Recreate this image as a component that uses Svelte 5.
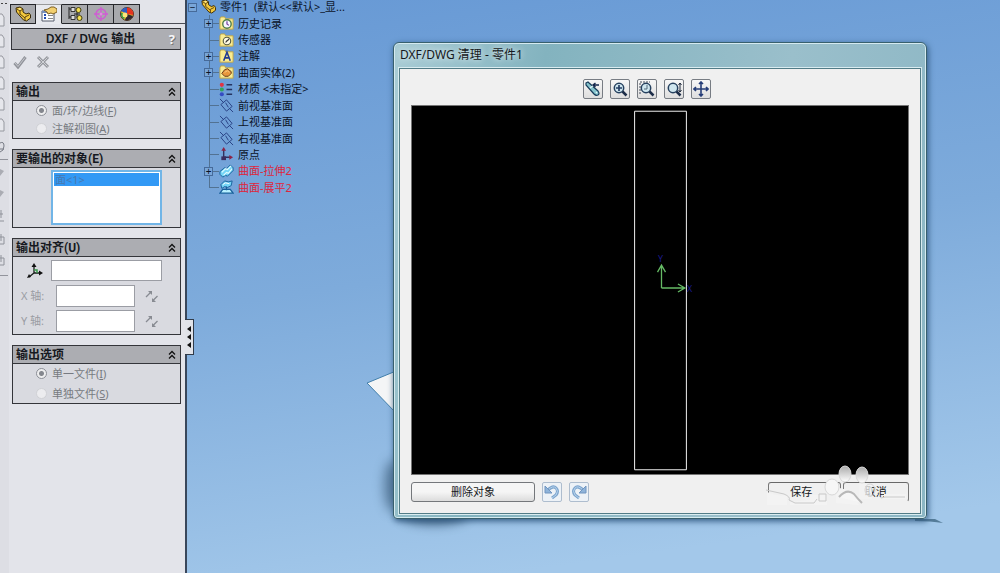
<script>
  const tabs = ['part', 'props', 'config', 'target', 'ball'];
  const marks = [20, 41, 62, 83, 104, 125];
  const tools = [
    { icon: 'wand', label: '清理' },
    { icon: 'fit', label: '整屏显示' },
    { icon: 'area', label: '局部放大' },
    { icon: 'zoom', label: '放大或缩小' },
    { icon: 'pan', label: '平移' }
  ];
  const nodes = [
    { icon: 'history', text: '历史记录', open: true },
    { icon: 'sensor', text: '传感器' },
    { icon: 'note', text: '注解', open: true },
    { icon: 'solid', text: '曲面实体(2)', open: true },
    { icon: 'material', text: '材质 <未指定>' },
    { icon: 'plane', text: '前视基准面' },
    { icon: 'plane', text: '上视基准面' },
    { icon: 'plane', text: '右视基准面' },
    { icon: 'origin', text: '原点' },
    { icon: 'extrude', text: '曲面-拉伸2', open: true, red: true },
    { icon: 'flatten', text: '曲面-展平2', red: true }
  ];
</script>

{#snippet icon(name)}
  <svg class="icon" viewBox="0 0 16 16" aria-hidden="true">
    {#if name === 'part'}
      <path d="M1 2l4-1 3 2v3l3 2 3-1 1.500 2v3l-4 3-3-1-7-8z" fill="#f3c83c" stroke="#3a2a08" />
      <path d="M2 3l3 2v3l5 4M5 5l3-2M10 14v-3l4-2" fill="none" stroke="#5a4210" />
      <path d="M3 3l2-1 1.500 1L5 4z" fill="#fff0a0" />
    {:else if name === 'props'}
      <path d="M1 5h12v10H1z" fill="#fff" stroke="#555b6b" />
      <path d="M1 5h12v2H1z" fill="#7990ba" />
      <path d="M3 9h2M3 12h2" stroke="#234bb0" stroke-width="2" />
      <path d="M7 9.500h5M7 12.500h5" stroke="#888" />
      <path d="M3 4l4-1 3-2h3l3 2v3l-4 2-2-1-3 1-1-2z" fill="#f2cf70" stroke="#7d5e22" />
    {:else if name === 'config'}
      <path d="M2 1v12M2 3h4M2 11h4M10 4v8M7 8h6" fill="none" stroke="#222" />
      <path d="M4 1.500h4v4H4zM4 9.500h4v4H4z" fill="#ddd" stroke="#333" />
      <circle cx="11.500" cy="4" r="2.500" fill="#f5df50" stroke="#444010" />
      <circle cx="12.500" cy="12" r="2.500" fill="#f5df50" stroke="#444010" />
    {:else if name === 'target'}
      <circle cx="8" cy="8" r="5" fill="none" stroke="#cf5bd3" stroke-width="1.300" />
      <path d="M8 1v14M1 8h14" stroke="#cf5bd3" stroke-width="1.300" />
      <circle cx="8" cy="8" r="1.500" fill="#e389e3" />
    {:else if name === 'ball'}
      <circle cx="8" cy="8" r="6.500" fill="#f5c527" stroke="#473126" />
      <path d="M8 8L2 5a6.500 6.500 0 0 1 6-3.500z" fill="#315bc0" />
      <path d="M8 8V1.500A6.500 6.500 0 0 1 14.400 9z" fill="#e53421" />
      <path d="M8 8l6 2a6.500 6.500 0 0 1-8 4z" fill="#302631" />
      <path d="M8 8l-3 5a6 6 0 0 1-3-6z" fill="#2d9b43" />
      <circle cx="6" cy="9" r="2.500" fill="#ffe57a" />
    {:else if name === 'history' || name === 'sensor' || name === 'note' || name === 'solid'}
      <path d="M1 3l1-2h4l1 2h8v11H1z" fill="#faec91" stroke="#bda449" />
      {#if name === 'history'}
        <circle cx="8.500" cy="8.500" r="4.500" fill="#f8f6ff" stroke="#4f7e49" stroke-width="1.500" />
        <path d="M8.500 5.500v3l2 1.500" fill="none" stroke="#7041a0" stroke-width="1.300" />
      {:else if name === 'sensor'}
        <circle cx="8.500" cy="8.500" r="4" fill="#fffbe3" stroke="#565942" stroke-width="1.200" />
        <path d="M7 10l4-4M8 8h2" stroke="#333" stroke-width="1.300" />
      {:else if name === 'note'}
        <path d="M5 12.500l3.500-9 3.500 9M6.500 9.500h4" fill="none" stroke="#233b91" stroke-width="1.700" />
      {:else}
        <path d="M3 9l3-4 3-1 4 3v2l-3 3H6z" fill="#e8973b" stroke="#633514" />
        <path d="M6 8l3-2 2 2" fill="none" stroke="#f8cb84" />
      {/if}
    {:else if name === 'material'}
      <circle cx="3" cy="3" r="2.200" fill="#df3544" />
      <circle cx="3" cy="8" r="2.200" fill="#31a45d" />
      <circle cx="3" cy="13" r="2.200" fill="#344cc3" />
      <path d="M8 3h6M8 8h6M8 13h6" stroke="#253461" stroke-width="1.500" />
    {:else if name === 'plane'}
      <path d="M2 7l6-5 6 7-6 5zM1 1l4 4M11 11l4 4M7 5l3 5" fill="none" stroke="#263f82" />
    {:else if name === 'origin'}
      <path d="M5 3v8h7" fill="none" stroke="#33305d" stroke-width="1.500" />
      <path d="M2.500 4L5 0l2.500 4zM11 8.500l4 2.500-4 2.500z" fill="#8d2347" />
      <path d="M2.500 10h5v4h-5z" fill="#3a2c5f" />
    {:else if name === 'extrude'}
      <path d="M1 8l5-4 2 1 4-4 3 3v3l-6 6-2-1-3 2-3-3z" fill="#75d5f6" stroke="#17609b" />
      <path d="M3 9l4-4 2 1 4-4M5 12l3-3 2 1 4-5" fill="none" stroke="#e1fbff" stroke-width="1.200" />
    {:else if name === 'flatten'}
      <path d="M2 5l4-4 4 1 4-1-1 5-4 2-3-1-3 2z" fill="#75d5f6" stroke="#17609b" />
      <path d="M1 14l3-4h8l3 4zM8 7v4" fill="#b7f0ff" stroke="#17609b" stroke-width="1.300" />
      <path d="M4 5l3-2 4 1" fill="none" stroke="#fff" />
    {:else if name === 'wand'}
      <path d="M1 2l2-1 10 9q2 3 0 4t-4-1L1 4z" fill="#87c5ce" stroke="#173c5a" stroke-width="1.200" />
      <path d="M5 7l4-3M11 11l1 1" stroke="#e3f8fa" stroke-width="1.300" />
      <path d="M8 4h6M10.500 2L8 4l2.500 2" fill="none" stroke="#14264c" stroke-width="1.400" />
    {:else if name === 'fit' || name === 'zoom' || name === 'area'}
      <circle cx="7" cy="7" r="4.700" fill="#cfe6ef" stroke="#26415f" stroke-width="1.500" />
      <path d="M10.500 10.500l4 4" stroke="#1d2e49" stroke-width="2.500" />
      {#if name === 'fit'}
        <path d="M7 4v6M4 7h6" stroke="#263f65" stroke-width="1.700" />
      {:else if name === 'area'}
        <path d="M1 13V1h10" fill="none" stroke="#454c5a" stroke-dasharray="2 1" />
        <path d="M8 4v4H5" fill="none" stroke="#536b7c" />
      {:else}
        <path d="M14 2v9M12.500 4L14 2l1.500 2M12.500 9l1.500 2 1.500-2" fill="none" stroke="#202b3d" />
      {/if}
    {:else if name === 'pan'}
      <path d="M8 1v14M1 8h14M6 3l2-2 2 2M6 13l2 2 2-2M3 6L1 8l2 2M13 6l2 2-2 2" fill="none" stroke="#263e78" stroke-width="1.600" />
    {:else if name === 'undo' || name === 'redo'}
      <g transform={name === 'redo' ? 'translate(16 0) scale(-1 1)' : undefined}>
        <path d="M4 6q5-5 8-2t0 7l-4 3" fill="none" stroke="#7ea5cd" stroke-width="3" />
        <path d="M4 6q5-5 8-2t0 7l-4 3" fill="none" stroke="#b5d3ee" />
        <path d="M1 2v7h7z" fill="#8fb4da" stroke="#7095c0" />
      </g>
    {/if}
  </svg>
{/snippet}

{#snippet heading(text)}
  <header><h2>{text}</h2>
    <button class="fold" aria-label="折叠"><svg viewBox="0 0 8 10"><path d="M1 4.500l3-3 3 3M1 8.500l3-3 3 3" /></svg></button>
  </header>
{/snippet}

{#snippet axis(name)}
  <div class="axis">
    <label for={'axis' + name}>{name} 轴:</label>
    <input id={'axis' + name} type="text" />
    <button class="flip" aria-label={'反转 ' + name + ' 轴'}>
      <svg viewBox="0 0 14 12"><path d="M1 7l5-5M7.500 11l5-5" /><path d="M3 1h4v4zM7 8v4h4z" fill="#888b92" stroke="none" /></svg>
    </button>
  </div>
{/snippet}

<div class="app">
  <div class="strip" aria-hidden="true">
    <svg viewBox="0 0 9 290">
      {#each marks as y}
        <path d="M-2 {y - 6}h4l2 3v9h-6" fill="#e6e7ec" stroke="#96989f" />
      {/each}
      <path d="M0 143q4-2 4 3t-4 6M0 149h4" fill="none" stroke="#777b84" />
      <path d="M0 159.500h8M0 275.500h8" stroke="#92949c" />
      <path d="M0 169l4 2-4 5zM0 190l4 2-4 5z" fill="#aaacb3" />
      <path d="M1 210v8M-1 214h4M0 221h4M0 237h4v7H0M1 234v7M0 258h4v7H0M1 255v7" fill="none" stroke="#8f929a" />
      <path d="M1 3.500h2M5 3.500h2" stroke="#444" />
    </svg>
  </div>

  <aside>
    <nav>
      {#each tabs as tab, i}
        <button class:active={i === 1} aria-label={tab}>{@render icon(tab)}</button>
      {/each}
    </nav>
    <div class="title"><h1>DXF / DWG 输出</h1><button aria-label="帮助">?</button></div>
    <div class="confirm">
      <button aria-label="确定"><svg viewBox="0 0 14 14"><path d="M1.500 8l3.500 4L12.500 2" fill="none" stroke="#91939a" stroke-width="3" /><path d="M2 8l3 3.500L12 2.500" fill="none" stroke="#c5c7cd" /></svg></button>
      <button aria-label="取消"><svg viewBox="0 0 14 14"><path d="M2 2l10 10M12 2L2 12" stroke="#97999f" stroke-width="3" /><path d="M2.500 2.500l9 9M11.500 2.500l-9 9" stroke="#cfd1d6" /></svg></button>
    </div>

    <section>
      {@render heading('输出')}
      <div class="choices">
        <label><input type="radio" name="kind" checked />面/环/边线(<u>F</u>)</label>
        <label><input type="radio" name="kind" />注解视图(<u>A</u>)</label>
      </div>
    </section>
    <section>
      {@render heading('要输出的对象(E)')}
      <div class="selection"><ul><li>面&lt;1&gt;</li></ul></div>
    </section>
    <section>
      {@render heading('输出对齐(U)')}
      <div class="align">
        <div class="pick">
          <label for="origin" aria-label="原点"><svg viewBox="0 0 16 16"><path d="M7 3v7h7M7 10l-5 4" fill="none" stroke="#161c18" stroke-width="1.300" /><path d="M4.500 4L7 0l2.500 4zM12 7.500l4 2.500-4 2.500zM0 15l2-4 2 3z" fill="#111" /><path d="M7 7h3v3" fill="none" stroke="#3b9c4e" stroke-width="1.500" /></svg></label>
          <input id="origin" type="text" />
        </div>
        {@render axis('X')}
        {@render axis('Y')}
      </div>
    </section>
    <section>
      {@render heading('输出选项')}
      <div class="choices files">
        <label><input type="radio" name="file" checked />单一文件(<u>I</u>)</label>
        <label><input type="radio" name="file" />单独文件(<u>S</u>)</label>
      </div>
    </section>
    <button class="handle" aria-label="收起面板"><i></i><i></i><i></i></button>
  </aside>

  <main>
    <ul class="tree">
      <li class="root"><span class="box">−</span>{@render icon('part')}<span>零件1&nbsp; (默认&lt;&lt;默认&gt;_显...</span></li>
      {#each nodes as node}
        <li class:red={node.red}>
          <span class="branch">{#if node.open}<span class="box">+</span>{/if}</span>
          {@render icon(node.icon)}
          <span>{node.text}</span>
        </li>
      {/each}
    </ul>

    <svg class="sheet" viewBox="0 0 30 44" aria-hidden="true"><path d="M1 13L30 1v42z" fill="#f4f5f6" stroke="#407eaa" /></svg>
    <div class="shade left"></div>
    <div class="shade base"></div>
    <svg class="tail" viewBox="0 0 28 5" aria-hidden="true"><path d="M0 0h20l8 4q-12-2-28-2z" fill="#557c99" /></svg>

    <div class="dialog" role="dialog" aria-labelledby="caption">
      <h2 id="caption">DXF/DWG 清理 - 零件1</h2>
      <div class="client">
        <div class="tools">
          {#each tools as tool}
            <button aria-label={tool.label}>{@render icon(tool.icon)}</button>
          {/each}
        </div>
        <div class="canvas">
          <svg viewBox="0 0 498 368" aria-hidden="true">
            <path d="M223.500 4.500h52v360h-52z" fill="none" stroke="#f2f2f2" />
            <path d="M250.500 182V159M250.500 182h23M246.500 166l4-7 4 7M267 178l7 4-7 4" fill="none" stroke="#65ba65" stroke-width="1.300" />
            <g class="axes"><text x="247" y="156">Y</text><text x="276" y="186">X</text></g>
          </svg>
        </div>
        <footer>
          <button class="push delete">删除对象</button>
          <button class="small" aria-label="撤销">{@render icon('undo')}</button>
          <button class="small" aria-label="重做">{@render icon('redo')}</button>
          <div class="finish">
            <button class="push">保存</button>
            <button class="push">取消</button>
            <svg class="paw" viewBox="0 0 150 44" aria-hidden="true">
              <defs><linearGradient id="pad" x2="0" y2="1"><stop stop-color="#aaa" /><stop offset="1" stop-color="#fff" /></linearGradient></defs>
              <path d="M2 27q12 5 20 3v10H2zM45 30h17v10H25v-3l20-2zM71 38V22l15 4 8 14zM119 29h22v5h-22z" fill="#f3f3f3" />
              <path d="M94 19h13v15H94z" fill="#f3f3f3" opacity=".75" />
              <path d="M1 25l18 4q7 3 5 6l6 3h19l3-4M54 29h7v7h-7zM112 29l4 4 4-1h20" fill="none" stroke="#c9c9c9" />
              <path d="M74 32q8-9 15-3 3 4 8 9" fill="#f6f6f6" stroke="#b8b8b8" stroke-width="2" />
              <g stroke="#d8d8d8" fill="url(#pad)"><ellipse cx="80" cy="9" rx="6" ry="8" /><ellipse cx="97" cy="10" rx="6" ry="8" /><ellipse cx="67" cy="22" rx="7" ry="8" fill="#f6f6f6" /></g>
              <ellipse cx="105" cy="25" rx="5" ry="6" fill="none" stroke="#d5d5d5" />
            </svg>
          </div>
        </footer>
      </div>
    </div>
  </main>
</div>

<style>
  :global(body) { margin: 0; }
  * { box-sizing: border-box; }
  .app { display: flex; min-height: 100vh; overflow: hidden; background: #e3e4ea; color: #151820; font: 11px/16px "Noto Sans", "Noto Sans CJK SC", sans-serif; }
  button { padding: 0; border: 0; background: none; color: inherit; font: inherit; }
  h1, h2, ul { margin: 0; padding: 0; font: inherit; list-style: none; }
  svg { display: block; }
  .icon { width: 16px; height: 16px; flex: none; }
  .strip { flex: 0 0 9px; background: #dddee4; }
  .strip svg { width: 9px; height: 290px; }

  aside { position: relative; flex: 0 0 178px; min-width: 0; padding: 4px 4px 0 1px; border-right: 2px solid #39475b; }
  nav { display: flex; height: 20px; margin-right: -4px; border-bottom: 1px solid #4b4d55; }
  nav button { display: grid; place-items: center; width: 26px; height: 20px; background: #a8a9ad; border: 1px solid #26272b; border-left-width: 0; }
  nav button:first-child { border-left-width: 1px; }
  nav button.active { background: #e8e9ee; border-bottom-color: #e8e9ee; border-top-color: #999; }
  .title { display: flex; align-items: center; height: 22px; margin: 4px 0 0 1px; padding-right: 5px; border: 1px solid #34353a; background: #adaeb3; }
  .title h1 { flex: 1; text-align: center; font: 600 12px/16px "Noto Sans", "Noto Sans CJK SC", sans-serif; }
  .title button { color: #f6f6f8; font-size: 13px; font-weight: 700; text-shadow: 1px 1px #777; }
  .confirm { display: flex; align-items: flex-start; gap: 9px; padding: 5px 3px; height: 32px; }
  .confirm svg { width: 14px; height: 14px; }
  section { margin: 0 0 10px 2px; border: 1px solid #34353a; background: #d9dae0; }
  section header { display: flex; align-items: center; height: 18px; padding: 0 4px 0 3px; border-bottom: 1px solid #34353a; background: #acadb2; }
  section h2 { flex: 1; font: 700 12px/16px Roboto, "Noto Sans CJK SC", sans-serif; }
  .fold svg { width: 8px; height: 10px; fill: none; stroke: #111; stroke-width: 1.3; }
  .choices { display: grid; gap: 1px; padding: 1px 0 1px 23px; color: #777a81; }
  .choices label { display: flex; align-items: center; height: 17px; }
  .choices.files { gap: 3px; }
  .choices input { appearance: none; width: 11px; height: 11px; margin: 0 5px 0 0; border: 1px solid #d0d1d5; border-radius: 50%; background: #ececef; }
  .choices input:checked { border-color: #8d9097; background: radial-gradient(circle, #84878e 0 2px, #eeeeef 3px); }
  .selection { padding: 2px 18px 2px 38px; }
  .selection ul { height: 55px; padding: 1px; border: 2px solid #71b5e7; background: #fff; }
  .selection li { height: 13px; padding-left: 1px; background: #3299f5; color: #4778b0; line-height: 14px; }
  input[type='text'] { width: 100%; min-width: 0; padding: 0 2px; border: 1px solid #9b9da4; background: #fff; font: inherit; }
  .align { padding: 3px 18px 2px 8px; color: #9a9ca3; }
  .pick { display: flex; align-items: center; padding-left: 6px; }
  .pick svg { width: 16px; height: 16px; }
  .pick label { flex: 0 0 24px; }
  .pick input { flex: 1; height: 21px; }
  .axis { display: flex; align-items: center; margin-top: 4px; height: 22px; }
  .axis + .axis { margin-top: 3px; }
  .axis label { flex: 0 0 35px; }
  .axis input { flex: 1; height: 22px; }
  .axis button { flex: 0 0 14px; margin: 0 3px 0 10px; }
  .flip svg { width: 14px; height: 12px; fill: none; stroke: #888b92; stroke-width: 1.3; }
  .handle { position: absolute; top: 319px; right: -9px; display: grid; place-content: center; gap: 2px; width: 9px; height: 36px; border: 1px solid #303b4a; border-left: 0; background: #e1e3e9; z-index: 1; }
  .handle i { border: 3px solid transparent; border-right: 4px solid #111; border-left: 0; }

  main { position: relative; flex: 1; min-width: 0; background: linear-gradient(172deg, #6799d5, #7eabdb 45%, #a3c8ea 90%); }
  .tree { position: relative; display: grid; grid-auto-rows: 1fr; width: 190px; height: 197px; margin-top: -1px; color: #0b1327; }
  .tree::before { content: ''; position: absolute; left: 22px; top: 16px; bottom: 8px; border-left: 1px solid #527292; }
  .tree li { position: relative; display: flex; align-items: center; white-space: nowrap; padding-left: 17px; }
  .tree .root { padding-left: 1px; gap: 4px; }
  .tree li > :global(.icon) { width: 15px; height: 15px; margin-right: 4px; }
  .tree .root > :global(.icon) { margin: -2px 0 0; }
  .branch { display: flex; align-items: center; width: 15px; }
  .branch::after { content: ''; flex: 1; margin-left: auto; border-top: 1px solid #527292; }
  .branch:not(:has(.box))::after { margin-left: 6px; }
  .box { position: relative; display: grid; place-items: center; width: 9px; height: 9px; border: 1px solid #466a99; background: #79a6d8; color: #081225; font-size: 10px; line-height: 7px; }
  .tree .red { color: #df263c; }

  .sheet { position: absolute; left: 179px; top: 370px; width: 30px; height: 44px; }
  .shade { position: absolute; border-radius: 50%; filter: blur(6px); background: #173650; }
  .shade.left { left: 197px; top: 460px; width: 18px; height: 52px; opacity: .5; }
  .shade.base { left: 214px; top: 506px; width: 66px; height: 18px; opacity: .7; }
  .tail { position: absolute; right: 57px; top: 519px; width: 28px; height: 5px; }

  .dialog { position: absolute; left: 206px; right: 73px; top: 42px; display: flex; flex-direction: column; height: 477px; padding: 0 5px 4px; border: 1px solid #38606d; border-radius: 6px 6px 4px 4px; background: linear-gradient(100deg, #a9ccd5, #83b3bf 25%, #9abfcb 65%, #8bb6c4); box-shadow: inset 0 0 0 1px #d5eaf0, 1px 2px 6px #2f587f; }
  #caption { height: 25px; padding: 4px 1px; font-size: 12px; text-shadow: 0 0 6px #fff; }
  .client { flex: 1; display: flex; flex-direction: column; min-height: 0; padding: 10px 11px 0; border: 1px solid #527c87; outline: 1px solid #d9ecf0; background: #f0f0f0; }
  .tools { display: flex; justify-content: center; gap: 7px; height: 26px; padding-right: 26px; }
  .tools button, .small { display: grid; place-items: center; width: 20px; height: 20px; border: 1px solid #777c83; border-radius: 2px; background: linear-gradient(#f7f7f7, #dedede); }
  .canvas { height: 370px; border: 1px solid #747474; background: #000; }
  .canvas svg { width: 100%; height: 100%; }
  .axes { fill: #1a1a8c; font-size: 9px; }
  footer { display: flex; align-items: center; gap: 7px; padding-top: 7px; }
  .push { height: 20px; border: 1px solid #74777b; border-radius: 3px; background: linear-gradient(#f5f5f5 50%, #dcdcdc); line-height: 18px; }
  .delete { width: 124px; }
  .small { border-color: #aebdce; background: #edf2f7; }
  .finish { position: relative; display: flex; gap: 2px; width: 141px; margin-left: auto; }
  .finish .push { flex: 1; border-color: #696969 #777 transparent; background: #f0f0f0; }
  .finish .push:first-child { padding-right: 6px; }
  .paw { position: absolute; left: -3px; top: -17px; width: 150px; height: 44px; pointer-events: none; }
</style>
